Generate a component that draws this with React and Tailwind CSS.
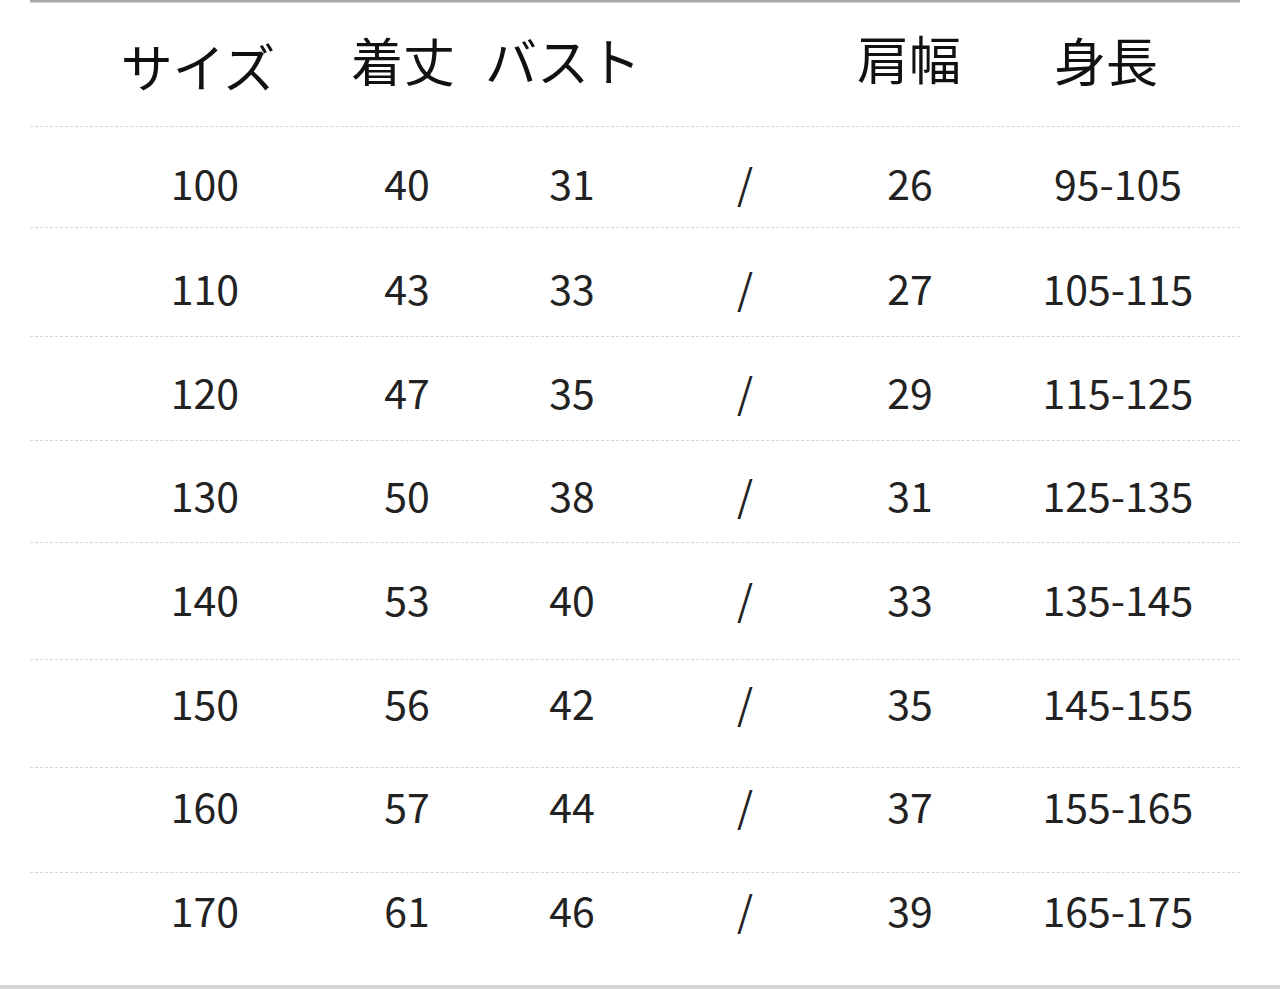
const rows = [
  { cells: ["100", "40", "31", "/", "26", "95-105"], box: "h-[101px] pt-[35px]" },
  { cells: ["110", "43", "33", "/", "27", "105-115"], box: "h-[109px] pt-[39px]" },
  { cells: ["120", "47", "35", "/", "29", "115-125"], box: "h-[104px] pt-[34px]" },
  { cells: ["130", "50", "38", "/", "31", "125-135"], box: "h-[102px] pt-[33px]" },
  { cells: ["140", "53", "40", "/", "33", "135-145"], box: "h-[117px] pt-[35px]" },
  { cells: ["150", "56", "42", "/", "35", "145-155"], box: "h-[108px] pt-[22px]" },
  { cells: ["160", "57", "44", "/", "37", "155-165"], box: "h-[105px] pt-[17px]" },
  { cells: ["170", "61", "46", "/", "39", "165-175"], box: "h-[112px] pt-[16px]", last: true },
];

// each cell is 160px wide; margins put the centres where the columns sit
const cellGaps = ["ml-[95px]", "ml-[42px]", "ml-[5px]", "ml-[13px]", "ml-[5px]", "ml-[48px]"];

const headers = [
  { t: "サイズ", m: "ml-[88px] mt-[6px]" },
  { t: "着丈", m: "ml-[45px]" },
  { t: "バスト", m: "ml-0" },
  { t: "肩幅", m: "ml-[186px] -mt-[2px]" },
  { t: "身長", m: "ml-[37px]" },
];

export default function App() {
  return (
    <div
      className="w-[1280px] h-[989px] bg-white flex flex-col overflow-hidden"
      style={{ fontFamily: '"Noto Sans CJK JP", "Noto Sans", sans-serif' }}
    >
      <div className="ml-[30px] w-[1210px] flex flex-col">
        <div className="h-[3px] bg-gradient-to-b from-[#9a9a9a] to-[#d0d0d0]" />
        {/* header */}
        <div className="h-[124px] border-b border-dashed border-[#d6d6d6] pt-[31px]">
          <div className="flex items-start text-[52px] leading-none text-[#111]">
            {headers.map((h, i) => (
              <div key={i} className={`${h.m} w-[160px] text-center whitespace-nowrap`}>
                {h.t}
              </div>
            ))}
          </div>
        </div>

        {rows.map((row, i) => (
          <div
            key={i}
            className={`${row.box} ${row.last ? "" : "border-b border-dashed border-[#d6d6d6]"}`}
          >
            <div className="flex text-[41px] leading-none text-[#222]">
              {row.cells.map((c, j) => (
                <div key={j} className={`${cellGaps[j]} w-[160px] text-center whitespace-nowrap`}>
                  {c}
                </div>
              ))}
            </div>
          </div>
        ))}
      </div>
      <div className="h-[4px] w-full bg-[#d4d4d4]" />
    </div>
  );
}
